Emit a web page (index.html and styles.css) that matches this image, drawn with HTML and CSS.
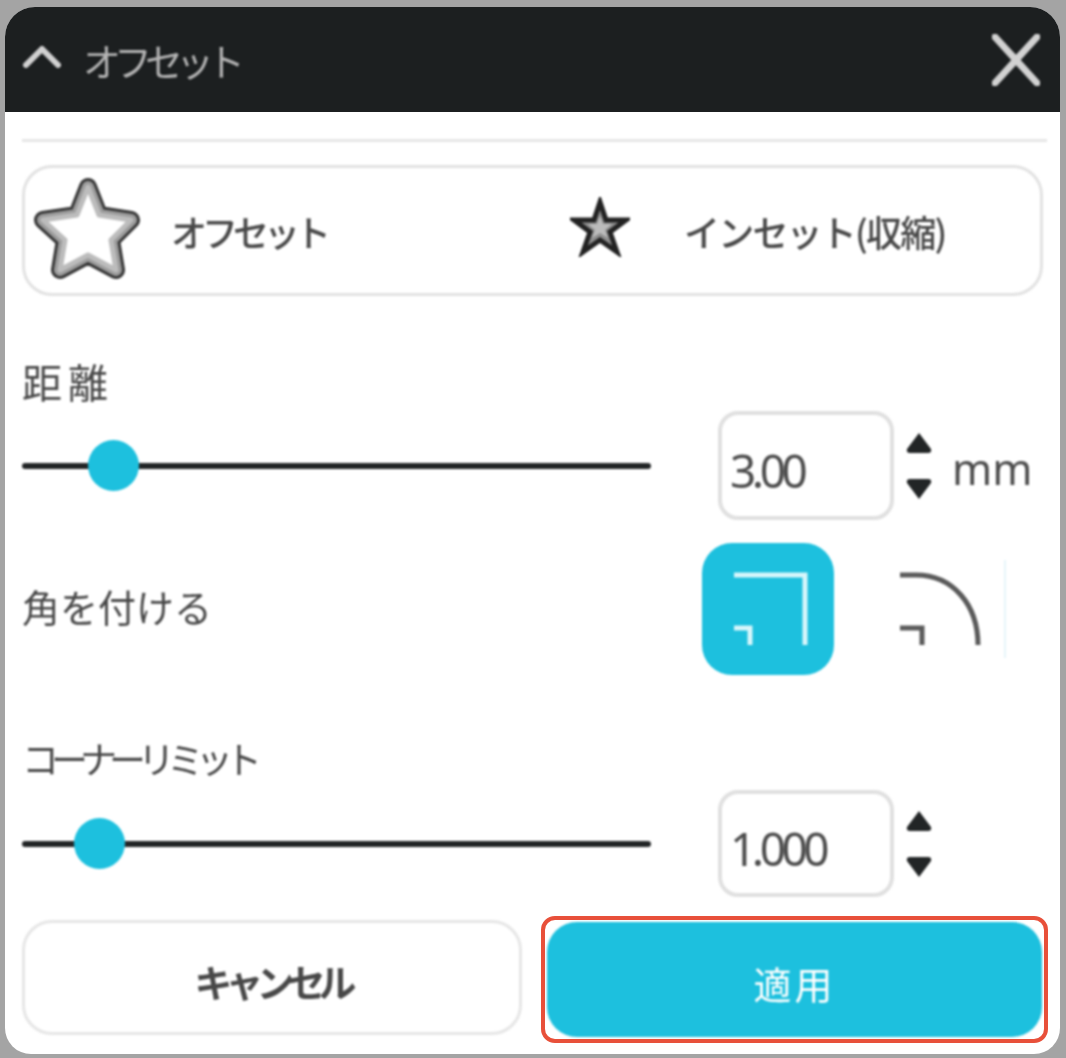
FILE: index.html
```html
<!DOCTYPE html>
<html lang="ja">
<head>
    <meta charset="UTF-8">
    <meta name="viewport" content="width=device-width, initial-scale=1.0">
    <title>オフセット</title>
    <link rel="stylesheet" href="styles.css">
</head>
<body>
    <div class="dialog">
        <header class="title-bar">
            <svg class="chevron" viewBox="0 0 40 24"><path d="M4 21 L20 5 L36 21"/></svg>
            <span class="title">オフセット</span>
            <svg class="close" viewBox="0 0 48 52"><path d="M3 3 L45 49 M45 3 L3 49"/></svg>
        </header>

        <div class="content">
            <div class="divider"></div>

            <div class="mode-box">
                <div class="mode mode-offset">
                    <svg class="star-big" viewBox="0 0 108 104">
                        <path class="s1" d="M55 10 L66 38 L98 43 L78 63 L83 93 L55 78 L27 93 L32 63 L10 43 L44 38 Z"/>
                        <path class="s2" d="M55 10 L66 38 L98 43 L78 63 L83 93 L55 78 L27 93 L32 63 L10 43 L44 38 Z"/>
                        <path class="s3" d="M55 10 L66 38 L98 43 L78 63 L83 93 L55 78 L27 93 L32 63 L10 43 L44 38 Z"/>
                    </svg>
                    <span class="mode-label">オフセット</span>
                </div>
                <div class="mode mode-inset">
                    <svg class="star-small" viewBox="0 0 60 60">
                        <path class="t1" d="M30 5 L36 23 L56 23 L40 35 L47 55 L30 43 L13 55 L20 35 L4 23 L24 23 Z"/>
                        <path class="t2" d="M30 19 L33 27 L42 27 L35 33 L38 41 L30 36 L22 41 L25 33 L18 27 L27 27 Z"/>
                    </svg>
                    <span class="mode-label">インセット(収縮)</span>
                </div>
            </div>

            <div class="field-label label-distance">距離</div>
            <div class="slider-row">
                <div class="slider"><span class="thumb" style="left: 14.5%"></span></div>
                <div class="number-box">3.00</div>
                <div class="spinner">
                    <svg viewBox="0 0 26 21"><path d="M13 0 L25 16 Q26 20 22 20 L4 20 Q0 20 1 16 Z"/></svg>
                    <svg viewBox="0 0 26 21"><path d="M13 21 L25 5 Q26 1 22 1 L4 1 Q0 1 1 5 Z"/></svg>
                </div>
                <span class="unit">mm</span>
            </div>

            <div class="corner-row">
                <span class="field-label label-corner">角を付ける</span>
                <div class="corner-btn active">
                    <svg viewBox="0 0 132 132"><path d="M32 32 H103 V102 M32 85 H48 V102"/></svg>
                </div>
                <div class="corner-btn">
                    <svg viewBox="0 0 132 132"><path d="M32 32 H48 C85 32 110 62 110 102 M32 85 H54 V102"/></svg>
                </div>
                <div class="corner-edge"></div>
            </div>

            <div class="field-label label-limit">コーナーリミット</div>
            <div class="slider-row limit-row">
                <div class="slider"><span class="thumb" style="left: 12.2%"></span></div>
                <div class="number-box">1.000</div>
                <div class="spinner">
                    <svg viewBox="0 0 26 21"><path d="M13 0 L25 16 Q26 20 22 20 L4 20 Q0 20 1 16 Z"/></svg>
                    <svg viewBox="0 0 26 21"><path d="M13 21 L25 5 Q26 1 22 1 L4 1 Q0 1 1 5 Z"/></svg>
                </div>
            </div>

            <div class="button-row">
                <button type="button" class="btn-cancel">キャンセル</button>
                <div class="apply-outline">
                    <button type="button" class="btn-apply">適用</button>
                </div>
            </div>
        </div>
    </div>
</body>
</html>
```

FILE: styles.css
```css
* {
    box-sizing: border-box;
}

html, body {
    height: 100%;
}

body {
    margin: 0;
    padding: 7px 6px 4px 5px;
    background-color: #a4a4a4;
    font-family: "Noto Sans CJK JP", sans-serif;
    color: #484848;
    overflow: hidden;
}

.dialog {
    height: 1047px;
    background-color: #ffffff;
    border-radius: 30px 30px 26px 26px;
    overflow: hidden;
}

/* 赤枠以外は少しぼかす */
.title-bar > *,
.divider,
.mode-box,
.field-label,
.slider-row,
.corner-row > div,
.btn-cancel,
.btn-apply {
    filter: blur(0.9px);
}

/* タイトルバー */
.title-bar {
    display: flex;
    align-items: center;
    height: 105px;
    padding: 0 20px 0 17px;
    background-color: #1c1f20;
}

.chevron {
    width: 40px;
    height: 24px;
    margin-bottom: 7px;
}

.chevron path,
.close path {
    fill: none;
    stroke: #d2d2d2;
    stroke-width: 6;
    stroke-linecap: round;
    stroke-linejoin: round;
}

.close {
    width: 48px;
    height: 52px;
    margin-left: auto;
}

.close path {
    stroke-width: 7;
}

.title {
    margin-left: 21px;
    font-size: 38px;
    letter-spacing: -7px;
    color: #b4b4b4;
    line-height: 1;
}

.content {
    padding: 27px 17px 0 17px;
}

.divider {
    height: 3px;
    margin-right: -4px;
    background-color: #e6e6e6;
}

/* オフセット / インセット */
.mode-box {
    display: flex;
    align-items: center;
    height: 131px;
    margin-top: 23px;
    border: 3px solid #e2e2e2;
    border-radius: 30px;
    padding-left: 8px;
}

.mode {
    display: flex;
    align-items: center;
}

.mode-offset {
    width: 537px;
}

.star-big {
    width: 108px;
    height: 104px;
    margin-top: -4px;
}

.star-big path {
    stroke-linejoin: round;
}

.s1 {
    fill: none;
    stroke: #363636;
    stroke-width: 18;
}

.s2 {
    fill: none;
    stroke: #9c9c9c;
    stroke-width: 12;
}

.s3 {
    fill: #ffffff;
    stroke: #bcbcbc;
    stroke-width: 5;
}

.star-small {
    width: 60px;
    height: 60px;
    margin-top: -8px;
}

.t1 {
    fill: #8e8e8e;
    stroke: #222222;
    stroke-width: 5;
}

.t2 {
    fill: #bcbcbc;
}

.mode-label {
    font-size: 36px;
    font-weight: 500;
    letter-spacing: -5px;
    line-height: 1;
    white-space: nowrap;
}

.mode-offset .mode-label {
    margin-left: 30px;
}

.mode-inset .mode-label {
    margin-left: 54px;
    letter-spacing: -1.8px;
}

/* ラベル */
.field-label {
    font-size: 38px;
    line-height: 33px;
    white-space: nowrap;
}

.label-distance {
    margin-top: 69px;
    font-size: 40px;
    letter-spacing: 6px;
}

.label-corner {
    letter-spacing: 0;
    width: 680px;
    margin-bottom: 8px;
    filter: blur(0.9px);
}

.label-limit {
    margin-top: 67px;
    font-size: 37px;
    letter-spacing: -8px;
}

/* スライダーと数値 */
.slider-row {
    display: flex;
    align-items: center;
    height: 109px;
    margin-top: 13px;
}

.limit-row {
    height: 107px;
    margin-top: 15px;
}

.slider {
    position: relative;
    width: 629px;
    height: 6px;
    margin-right: 67px;
    background-color: #222526;
    border-radius: 3px;
}

.thumb {
    position: absolute;
    top: -23px;
    width: 51px;
    height: 51px;
    margin-left: -25px;
    border-radius: 50%;
    background-color: #1dc0de;
}

.number-box {
    display: flex;
    align-items: center;
    width: 176px;
    height: 100%;
    padding: 8px 0 0 8px;
    border: 4px solid #e0e0e0;
    border-radius: 20px;
    font-family: "Noto Sans", sans-serif;
    font-size: 46px;
    letter-spacing: -4.5px;
    color: #4c4c4c;
}

.spinner {
    display: flex;
    flex-direction: column;
    gap: 24px;
    width: 26px;
    margin-left: 12px;
}

.spinner svg {
    display: block;
    width: 26px;
    height: 21px;
    fill: #222526;
}

.unit {
    margin: 5px 0 0 20px;
    font-family: "Noto Sans", sans-serif;
    font-size: 43px;
    color: #4c4c4c;
}

/* 角を付ける */
.corner-row {
    display: flex;
    align-items: center;
    height: 132px;
    margin-top: 23px;
}

.corner-btn {
    width: 132px;
    height: 132px;
    border-radius: 30px;
}

.corner-btn + .corner-btn {
    margin-left: 34px;
}

.corner-btn svg {
    display: block;
    width: 132px;
    height: 132px;
}

.corner-btn path {
    fill: none;
    stroke: #5a5a5a;
    stroke-width: 5;
}

.corner-btn.active {
    background-color: #1dc0de;
}

.corner-btn.active path {
    stroke: #d8f6fb;
}

.corner-edge {
    width: 2px;
    height: 98px;
    margin-left: 4px;
    background-color: #e6f6fa;
}

/* ボタン */
.button-row {
    display: flex;
    align-items: flex-start;
    margin: 19px -5px 0 0;
}

.btn-cancel,
.btn-apply {
    font-family: inherit;
    font-size: 38px;
    padding-top: 6px;
    border-radius: 30px;
}

.btn-cancel {
    width: 500px;
    height: 115px;
    margin-top: 4px;
    background-color: #ffffff;
    border: 3px solid #e6e6e6;
    font-weight: 700;
    letter-spacing: -7px;
    color: #484848;
}

.apply-outline {
    width: 507px;
    height: 127px;
    margin-left: 19px;
    padding: 2px;
    border: 4px solid #e8503a;
    border-radius: 14px;
}

.btn-apply {
    display: block;
    width: 100%;
    height: 100%;
    border: none;
    background-color: #1dc0de;
    color: #ffffff;
    letter-spacing: 3px;
}
```
